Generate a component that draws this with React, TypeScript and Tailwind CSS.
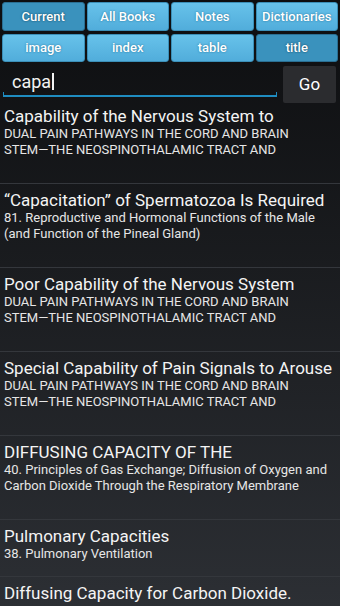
import React from 'react'

const scopes = ['Current', 'All Books', 'Notes', 'Dictionaries']
const fields = ['image', 'index', 'table', 'title']

type Hit = { title: string; sub: string[] }

const hits: Hit[] = [
  {
    title: 'Capability of the Nervous System to',
    sub: ['DUAL PAIN PATHWAYS IN THE CORD AND BRAIN', 'STEM—THE NEOSPINOTHALAMIC TRACT AND'],
  },
  {
    title: '“Capacitation” of Spermatozoa Is Required',
    sub: ['81. Reproductive and Hormonal Functions of the Male', '(and Function of the Pineal Gland)'],
  },
  {
    title: 'Poor Capability of the Nervous System',
    sub: ['DUAL PAIN PATHWAYS IN THE CORD AND BRAIN', 'STEM—THE NEOSPINOTHALAMIC TRACT AND'],
  },
  {
    title: 'Special Capability of Pain Signals to Arouse',
    sub: ['DUAL PAIN PATHWAYS IN THE CORD AND BRAIN', 'STEM—THE NEOSPINOTHALAMIC TRACT AND'],
  },
  {
    title: 'DIFFUSING CAPACITY OF THE',
    sub: ['40. Principles of Gas Exchange; Diffusion of Oxygen and', 'Carbon Dioxide Through the Respiratory Membrane'],
  },
  { title: 'Pulmonary Capacities', sub: ['38. Pulmonary Ventilation'] },
  { title: 'Diffusing Capacity for Carbon Dioxide.', sub: [] },
]

function TabButton({ label, active }: { label: string; active: boolean }) {
  return (
    <button
      className={
        active
          ? 'flex-1 rounded-[3px] border border-[#2a6f93] bg-[#3a92bd] text-[13px] font-medium text-white [text-shadow:0_0_2px_#0b3a52]'
          : 'flex-1 rounded-[3px] border border-[#3b8fb8] bg-gradient-to-b from-[#67c2ea] to-[#51addb] text-[13px] font-medium text-white [text-shadow:0_0_2px_#1f6d92]'
      }
    >
      {label}
    </button>
  )
}

export default function App() {
  return (
    <div className="flex h-[606px] w-[340px] flex-col overflow-hidden bg-gradient-to-b from-[#0d0e10] to-[#2c2f34] font-['Roboto','Noto_Sans',sans-serif] text-white">
      <div className="flex h-[31px] shrink-0 gap-[2px] px-[2px] pt-[2px]">
        {scopes.map((s, i) => (
          <TabButton key={s} label={s} active={i === 0} />
        ))}
      </div>
      <div className="mt-[3px] flex h-[28px] shrink-0 gap-[2px] px-[2px]">
        {fields.map((f, i) => (
          <TabButton key={f} label={f} active={i === 3} />
        ))}
      </div>

      <div className="flex h-[42px] shrink-0 items-start pt-[3px]">
        <div className="relative ml-[3px] h-[32px] w-[274px]">
          <div className="flex h-full items-center pl-[9px] text-[18px] text-[#f2f2f2]">
            capa
            <span className="ml-[1px] h-[17px] w-[2px] bg-[#f2f2f2]" />
          </div>
          <div className="absolute bottom-0 left-0 right-0 h-[2px] bg-[#1f8cc0]" />
          <div className="absolute bottom-0 left-0 h-[5px] w-[1px] bg-[#1f8cc0]" />
          <div className="absolute bottom-0 right-0 h-[5px] w-[1px] bg-[#1f8cc0]" />
        </div>
        <button className="ml-[6px] mt-[1px] h-[37px] w-[53px] rounded-[2px] bg-[#2b2c2f] text-[17px] text-white">
          Go
        </button>
      </div>

      <div className="-mt-[4px] flex shrink-0 flex-col">
        {hits.map((h, i) => (
          <div
            key={i}
            className={
              (i === 0 ? '' : 'border-t border-[#34373c] ') +
              (h.sub.length === 2 ? 'pb-[25px] ' : 'pb-[14px] ') +
              'pl-[4px] pt-[6px]'
            }
          >
            <div className="h-[20px] whitespace-nowrap text-[17px] leading-[20px] text-[#f4f4f4]">{h.title}</div>
            {h.sub.map((line, j) => (
              <div key={j} className="h-[16px] whitespace-nowrap text-[13px] leading-[16px] text-[#e6e6e6]">
                {line}
              </div>
            ))}
          </div>
        ))}
      </div>
    </div>
  )
}
